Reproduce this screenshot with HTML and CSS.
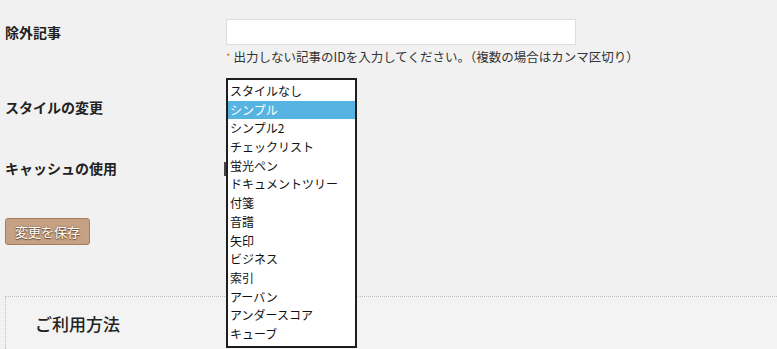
FILE: index.html
```html
<!DOCTYPE html>
<html lang="ja">
<head>
<meta charset="utf-8">
<link rel="stylesheet" href="styles.css">
</head>
<body>
<div class="form">
  <div class="row row-exclude">
    <div class="label">除外記事</div>
    <div class="field">
      <div class="text-input"></div>
      <div class="help"><span class="star">*</span> 出力しない記事のIDを入力してください。（複数の場合はカンマ区切り）</div>
    </div>
  </div>
  <div class="row row-style">
    <div class="label">スタイルの変更</div>
    <div class="field"><div class="closed-select"></div></div>
  </div>
  <div class="row row-cache">
    <div class="label">キャッシュの使用</div>
    <div class="field"><div class="cache-select"></div></div>
  </div>
  <div class="actions"><button class="save">変更を保存</button></div>
</div>
<div class="panel">
  <h2 class="panel-title">ご利用方法</h2>
</div>
<ul class="listbox">
  <li>スタイルなし</li>
  <li class="selected">シンプル</li>
  <li>シンプル2</li>
  <li>チェックリスト</li>
  <li>蛍光ペン</li>
  <li>ドキュメントツリー</li>
  <li>付箋</li>
  <li>音譜</li>
  <li>矢印</li>
  <li>ビジネス</li>
  <li>索引</li>
  <li>アーバン</li>
  <li>アンダースコア</li>
  <li>キューブ</li>
</ul>
</body>
</html>
```
FILE: styles.css
```css
html, body {
  margin: 0;
  padding: 0;
  height: 100%;
  overflow: hidden;
}
body {
  background: #f1f1f1;
  font-family: "Noto Sans CJK JP", "Noto Sans", sans-serif;
  color: #222;
  position: relative;
}
.form {
  padding: 19px 0 0 5px;
}
.row {
  display: grid;
  grid-template-columns: 221px 1fr;
}
.label {
  font-size: 14px;
  font-weight: bold;
  color: #222;
}
.row-exclude .label {
  line-height: 26px;
}
.text-input {
  width: 348px;
  height: 24px;
  background: #fff;
  border: 1px solid #dddddd;
}
.help {
  margin-top: 3px;
  font-size: 12.5px;
  line-height: 18px;
  color: #333;
  white-space: nowrap;
}
.star {
  color: #d08a3a;
  font-size: 10px;
  vertical-align: top;
}
.row-style {
  margin-top: 31px;
}
.row-style .label,
.row-cache .label {
  line-height: 20px;
}
.closed-select {
  height: 20px;
}
.row-cache {
  margin-top: 41px;
}
.cache-select {
  margin: 4px 0 0 -2px;
  width: 60px;
  height: 14px;
  border-left: 2px solid #444;
}
.actions {
  margin-top: 40px;
}
.save {
  display: block;
  width: 85px;
  height: 27px;
  margin: 0;
  padding: 0;
  background: #c7a183;
  border: 1px solid #a97d5b;
  border-radius: 3px;
  color: #fff;
  font-family: "Noto Sans CJK JP", sans-serif;
  font-size: 13px;
  line-height: 25px;
  text-shadow: 0 1px 1px #6b4a30, 0 0 2px #7a5538;
}
.panel {
  margin: 51px 0 0 5px;
  border-top: 1px dotted #bdbdbd;
  border-left: 1px dotted #bdbdbd;
  background: #f3f3f3;
  height: 37px;
  padding: 15px 0 0 29px;
}
.panel-title {
  margin: 0;
  font-size: 17px;
  font-weight: 500;
  line-height: 24px;
  color: #222;
}
.listbox {
  position: absolute;
  left: 226px;
  top: 78px;
  width: 127px;
  height: 264px;
  margin: 0;
  padding: 2px 0 0;
  list-style: none;
  background: #fff;
  border: 2px solid #1e1e1e;
  box-sizing: content-box;
}
.listbox li {
  height: 18.7px;
  line-height: 18.7px;
  padding-left: 2px;
  font-size: 12px;
  color: #111;
  white-space: nowrap;
}
.listbox li.selected {
  background: #57b4e2;
  color: #fff;
}
```
